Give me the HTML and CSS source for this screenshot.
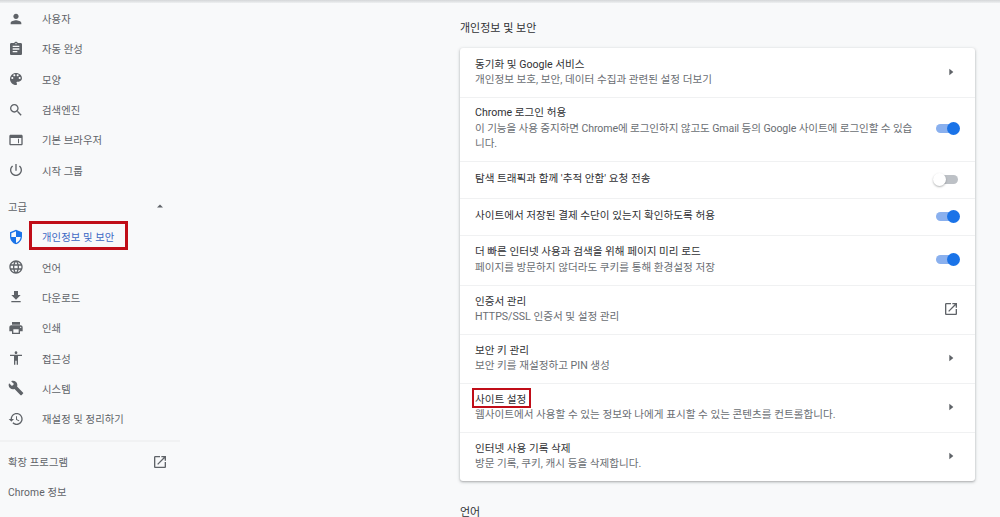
FILE: index.html
```html
<!DOCTYPE html>
<html lang="ko">
<head>
<meta charset="utf-8">
<title>설정</title>
<link rel="stylesheet" href="styles.css">
</head>
<body>
<svg class="sprite" aria-hidden="true">
  <symbol id="i-person" viewBox="0 0 24 24"><path d="M12 12c2.21 0 4-1.79 4-4s-1.79-4-4-4-4 1.79-4 4 1.79 4 4 4zm0 2c-2.67 0-8 1.34-8 4v2h16v-2c0-2.66-5.33-4-8-4z"/></symbol>
  <symbol id="i-assign" viewBox="0 0 24 24"><path d="M19 3h-4.18C14.4 1.84 13.3 1 12 1c-1.3 0-2.4.84-2.82 2H5c-1.1 0-2 .9-2 2v14c0 1.1.9 2 2 2h14c1.1 0 2-.9 2-2V5c0-1.1-.9-2-2-2zm-7 0c.55 0 1 .45 1 1s-.45 1-1 1-1-.45-1-1 .45-1 1-1zm2 14H7v-2h7v2zm3-4H7v-2h10v2zm0-4H7V7h10v2z"/></symbol>
  <symbol id="i-palette" viewBox="0 0 24 24"><path d="M12 3c-4.97 0-9 4.03-9 9s4.03 9 9 9c.83 0 1.5-.67 1.5-1.5 0-.39-.15-.74-.39-1.01-.23-.26-.38-.61-.38-.99 0-.83.67-1.5 1.5-1.5H16c2.76 0 5-2.24 5-5 0-4.42-4.03-8-9-8zm-5.5 9c-.83 0-1.5-.67-1.5-1.5S5.67 9 6.5 9 8 9.67 8 10.5 7.33 12 6.5 12zm3-4C8.67 8 8 7.33 8 6.5S8.67 5 9.5 5s1.5.67 1.5 1.5S10.33 8 9.5 8zm5 0c-.83 0-1.5-.67-1.5-1.5S13.67 5 14.5 5s1.5.67 1.5 1.5S15.33 8 14.5 8zm3 4c-.83 0-1.5-.67-1.5-1.5S16.67 9 17.5 9s1.5.67 1.5 1.5-.67 1.5-1.5 1.5z"/></symbol>
  <symbol id="i-search" viewBox="0 0 24 24"><path d="M15.5 14h-.79l-.28-.27C15.41 12.59 16 11.11 16 9.5 16 5.91 13.09 3 9.5 3S3 5.91 3 9.5 5.91 16 9.5 16c1.61 0 3.09-.59 4.23-1.57l.27.28v.79l5 4.99L20.49 19l-4.99-5zm-6 0C7.01 14 5 11.99 5 9.5S7.01 5 9.5 5 14 7.01 14 9.5 11.99 14 9.5 14z"/></symbol>
  <symbol id="i-web" viewBox="0 0 24 24"><path d="M20 4H4c-1.1 0-2 .9-2 2v12c0 1.1.9 2 2 2h16c1.1 0 2-.9 2-2V6c0-1.1-.9-2-2-2zm0 14H4V9h16v9zM15 10h1.5v7H15z"/></symbol>
  <symbol id="i-power" viewBox="0 0 24 24"><path d="M13 3h-2v10h2V3zm4.83 2.17l-1.42 1.42C17.99 7.86 19 9.81 19 12c0 3.87-3.13 7-7 7s-7-3.13-7-7c0-2.19 1.01-4.14 2.58-5.42L6.17 5.17C4.23 6.82 3 9.26 3 12c0 4.97 4.03 9 9 9s9-4.03 9-9c0-2.74-1.23-5.18-3.17-6.83z"/></symbol>
  <symbol id="i-shield" viewBox="0 0 24 24"><path d="M12 1L3 5v6c0 5.55 3.84 10.74 9 12 5.16-1.26 9-6.45 9-12V5l-9-4zm0 10.99h7c-.53 4.12-3.28 7.79-7 8.94V12H5V6.3l7-3.11v8.8z"/></symbol>
  <symbol id="i-globe" viewBox="0 0 24 24"><path d="M11.99 2C6.47 2 2 6.48 2 12s4.47 10 9.99 10C17.52 22 22 17.52 22 12S17.52 2 11.99 2zm6.93 6h-2.95c-.32-1.25-.78-2.45-1.38-3.56 1.84.63 3.37 1.91 4.33 3.56zM12 4.04c.83 1.2 1.48 2.53 1.91 3.96h-3.82c.43-1.43 1.08-2.76 1.91-3.96zM4.26 14C4.1 13.36 4 12.69 4 12s.1-1.36.26-2h3.38c-.08.66-.14 1.32-.14 2 0 .68.06 1.34.14 2H4.26zm.82 2h2.95c.32 1.25.78 2.45 1.38 3.56-1.84-.63-3.37-1.9-4.33-3.56zm2.95-8H5.08c.96-1.66 2.49-2.93 4.33-3.56C8.81 5.55 8.35 6.75 8.03 8zM12 19.96c-.83-1.2-1.48-2.53-1.91-3.96h3.82c-.43 1.43-1.08 2.76-1.91 3.96zM14.34 14H9.66c-.09-.66-.16-1.32-.16-2 0-.68.07-1.35.16-2h4.68c.09.65.16 1.32.16 2 0 .68-.07 1.34-.16 2zm.25 5.56c.6-1.11 1.06-2.31 1.38-3.56h2.95c-.96 1.65-2.49 2.93-4.33 3.56zM16.36 14c.08-.66.14-1.32.14-2 0-.68-.06-1.34-.14-2h3.38c.16.64.26 1.31.26 2s-.1 1.36-.26 2h-3.38z"/></symbol>
  <symbol id="i-download" viewBox="0 0 24 24"><path d="M19 9h-4V3H9v6H5l7 7 7-7zM5 18v2h14v-2H5z"/></symbol>
  <symbol id="i-print" viewBox="0 0 24 24"><path d="M19 8H5c-1.66 0-3 1.34-3 3v6h4v4h12v-4h4v-6c0-1.66-1.34-3-3-3zm-3 11H8v-5h8v5zm3-7c-.55 0-1-.45-1-1s.45-1 1-1 1 .45 1 1-.45 1-1 1zm-1-9H6v4h12V3z"/></symbol>
  <symbol id="i-access" viewBox="0 0 24 24"><path d="M12 2c1.1 0 2 .9 2 2s-.9 2-2 2-2-.9-2-2 .9-2 2-2zm9 7h-6v13h-2v-6h-2v6H9V9H3V7h18v2z"/></symbol>
  <symbol id="i-build" viewBox="0 0 24 24"><path d="M22.7 19l-9.1-9.1c.9-2.3.4-5-1.5-6.9-2-2-5-2.4-7.4-1.3L9 6 6 9 1.6 4.7C.4 7.1.9 10.1 2.9 12.1c1.9 1.9 4.6 2.4 6.9 1.5l9.1 9.1c.4.4 1 .4 1.4 0l2.3-2.3c.5-.4.5-1.1.1-1.4z"/></symbol>
  <symbol id="i-restore" viewBox="0 0 24 24"><path d="M13 3c-4.97 0-9 4.03-9 9H1l3.89 3.89.07.14L9 12H6c0-3.87 3.13-7 7-7s7 3.13 7 7-3.13 7-7 7c-1.93 0-3.68-.79-4.94-2.06l-1.42 1.42C8.27 19.99 10.51 21 13 21c4.97 0 9-4.03 9-9s-4.03-9-9-9zm-1 5v5l4.28 2.54.72-1.21-3.5-2.08V8H12z"/></symbol>
  <symbol id="i-open" viewBox="0 0 24 24"><path d="M19 19H5V5h7V3H5c-1.11 0-2 .9-2 2v14c0 1.1.89 2 2 2h14c1.1 0 2-.9 2-2v-7h-2v7zM14 3v2h3.59l-9.83 9.83 1.41 1.41L19 6.41V10h2V3h-7z"/></symbol>
  <symbol id="i-right" viewBox="0 0 24 24"><path d="M9.5 7l6 5-6 5z"/></symbol>
  <symbol id="i-up" viewBox="0 0 24 24"><path d="M6 15l6-6 6 6z"/></symbol>
</svg>

<div class="topline"></div>
<div class="page">
  <nav class="side">
    <ul class="nav-group">
      <li class="nav-item"><svg class="ico"><use href="#i-person"/></svg><span>사용자</span></li>
      <li class="nav-item"><svg class="ico"><use href="#i-assign"/></svg><span>자동 완성</span></li>
      <li class="nav-item"><svg class="ico"><use href="#i-palette"/></svg><span>모양</span></li>
      <li class="nav-item"><svg class="ico"><use href="#i-search"/></svg><span>검색엔진</span></li>
      <li class="nav-item"><svg class="ico"><use href="#i-web"/></svg><span>기본 브라우저</span></li>
      <li class="nav-item"><svg class="ico"><use href="#i-power"/></svg><span>시작 그룹</span></li>
    </ul>
    <div class="nav-head"><span>고급</span><svg class="ico caret"><use href="#i-up"/></svg></div>
    <ul class="nav-group">
      <li class="nav-item active"><svg class="ico"><use href="#i-shield"/></svg><span class="mark mark-side">개인정보 및 보안</span></li>
      <li class="nav-item"><svg class="ico"><use href="#i-globe"/></svg><span>언어</span></li>
      <li class="nav-item"><svg class="ico"><use href="#i-download"/></svg><span>다운로드</span></li>
      <li class="nav-item"><svg class="ico"><use href="#i-print"/></svg><span>인쇄</span></li>
      <li class="nav-item"><svg class="ico"><use href="#i-access"/></svg><span>접근성</span></li>
      <li class="nav-item"><svg class="ico"><use href="#i-build"/></svg><span>시스템</span></li>
      <li class="nav-item"><svg class="ico"><use href="#i-restore"/></svg><span>재설정 및 정리하기</span></li>
    </ul>
    <div class="nav-foot">
      <div class="nav-link"><span>확장 프로그램</span><svg class="ico"><use href="#i-open"/></svg></div>
      <div class="nav-link"><span>Chrome 정보</span></div>
    </div>
  </nav>

  <main class="content">
    <h2 class="sec-title">개인정보 및 보안</h2>
    <section class="card">
      <div class="row h49">
        <div class="txt"><div class="lab">동기화 및 Google 서비스</div><div class="sub">개인정보 보호, 보안, 데이터 수집과 관련된 설정 더보기</div></div>
        <svg class="ico arrow"><use href="#i-right"/></svg>
      </div>
      <div class="row h64">
        <div class="txt"><div class="lab">Chrome 로그인 허용</div><div class="sub tight">이 기능을 사용 중지하면 Chrome에 로그인하지 않고도 Gmail 등의 Google 사이트에 로그인할 수 있습니다.</div></div>
        <span class="toggle on"></span>
      </div>
      <div class="row h37">
        <div class="txt"><div class="lab">탐색 트래픽과 함께 '추적 안함' 요청 전송</div></div>
        <span class="toggle"></span>
      </div>
      <div class="row h37">
        <div class="txt"><div class="lab">사이트에서 저장된 결제 수단이 있는지 확인하도록 허용</div></div>
        <span class="toggle on"></span>
      </div>
      <div class="row h50">
        <div class="txt"><div class="lab">더 빠른 인터넷 사용과 검색을 위해 페이지 미리 로드</div><div class="sub">페이지를 방문하지 않더라도 쿠키를 통해 환경설정 저장</div></div>
        <span class="toggle on"></span>
      </div>
      <div class="row h49">
        <div class="txt"><div class="lab">인증서 관리</div><div class="sub">HTTPS/SSL 인증서 및 설정 관리</div></div>
        <svg class="ico arrow"><use href="#i-open"/></svg>
      </div>
      <div class="row h49">
        <div class="txt"><div class="lab">보안 키 관리</div><div class="sub">보안 키를 재설정하고 PIN 생성</div></div>
        <svg class="ico arrow"><use href="#i-right"/></svg>
      </div>
      <div class="row h49">
        <div class="txt"><div class="lab"><span class="mark mark-main">사이트 설정</span></div><div class="sub">웹사이트에서 사용할 수 있는 정보와 나에게 표시할 수 있는 콘텐츠를 컨트롤합니다.</div></div>
        <svg class="ico arrow"><use href="#i-right"/></svg>
      </div>
      <div class="row h49">
        <div class="txt"><div class="lab">인터넷 사용 기록 삭제</div><div class="sub">방문 기록, 쿠키, 캐시 등을 삭제합니다.</div></div>
        <svg class="ico arrow"><use href="#i-right"/></svg>
      </div>
    </section>
    <h2 class="sec-title">언어</h2>
  </main>
</div>
</body>
</html>
```

FILE: styles.css
```css
*, *::after { box-sizing: border-box; }
html, body { margin: 0; height: 517px; overflow: hidden; }
body {
  background: #f8f9fa;
  color: #202124;
  font-family: Roboto, "Noto Sans CJK KR", "Liberation Sans", sans-serif;
  font-size: 10.6px;
}
.sprite { display: none; }
ul { list-style: none; margin: 0; padding: 0; }

.topline { height: 3px; background: linear-gradient(#d4d6d8, #eef0f1); }

.page { display: flex; }

.side { width: 180px; flex: none; padding-top: .5px; color: #5f6368; font-size: 10.3px; letter-spacing: .1px; }
.nav-item { height: 30.3px; display: flex; align-items: center; gap: 18px; padding-left: 8px; }
.ico { width: 16px; height: 16px; fill: #5f6368; flex: none; }
.active { color: #3b68c4; }
.active .ico { fill: #1a73e8; }

.nav-head { height: 30px; margin: 6px 0 .4px; padding: 0 12px 0 8px; display: flex; align-items: center; justify-content: space-between; }
.caret { width: 12px; height: 12px; margin-right: 2px; }

.nav-foot { margin-top: 6.1px; padding-top: 5px; border-top: 2px solid #f1f2f3; }
.nav-link { height: 30px; padding: 0 12px 0 8px; display: flex; align-items: center; justify-content: space-between; }

.mark { position: relative; }
.mark::after { content: ""; position: absolute; border: 3px solid #c00d18; pointer-events: none; }
.mark-side::after { left: -13px; top: -8px; width: 99px; height: 29px; }
.mark-main::after { left: -3px; top: -5px; width: 59px; height: 20px; border-width: 2px; }

.content { margin-left: 280px; width: 515px; }
.sec-title { margin: 0; height: 45px; padding-top: 18px; font-size: 11px; line-height: 16px; font-weight: 400; color: #303134; }
.card + .sec-title { padding-top: 24px; }

.card { background: #fff; border-radius: 3px; box-shadow: 0 1px 2px rgba(60,64,67,.3), 0 1px 3px 1px rgba(60,64,67,.12); }
.row { display: flex; align-items: center; justify-content: space-between; padding: 0 15px 2px; border-top: 1px solid #f0f1f2; }
.row:first-child { border-top: 0; padding-bottom: 1px; }
.h49 { height: 49px; }
.h64 { height: 64px; }
.h37 { height: 37px; }
.h50 { height: 50px; }

.txt { width: 445px; line-height: 15.5px; }
.lab { color: #303134; }
.sub { color: #6a6e73; }
.tight { letter-spacing: -.11px; }

.arrow { margin-right: 1px; }

.toggle { position: relative; width: 22px; height: 9px; border-radius: 5px; background: #bdc1c6; margin-right: 2px; flex: none; }
.toggle::after { content: ""; position: absolute; left: -3px; top: -2px; width: 13px; height: 13px; border-radius: 50%; background: #fff; box-shadow: 0 1px 2px rgba(60,64,67,.4); }
.toggle.on { background: #8ab0ee; }
.toggle.on::after { left: 11px; background: #1a73e8; box-shadow: none; }
```
